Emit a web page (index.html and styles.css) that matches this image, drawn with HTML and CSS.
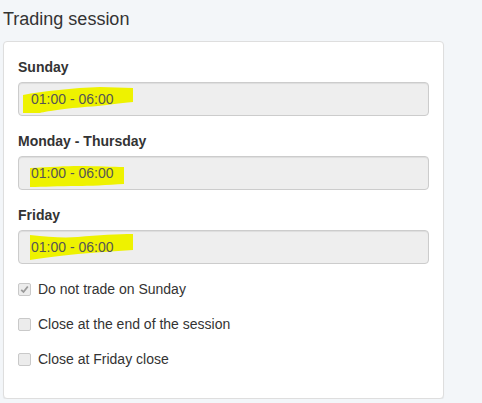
FILE: index.html
```html
<!DOCTYPE html>
<html>
<head>
<meta charset="utf-8">
<link rel="stylesheet" href="styles.css">
</head>
<body>
<h3 class="title">Trading session</h3>
<div class="card">
  <div class="group">
    <label class="lbl">Sunday</label>
    <div class="field">
      <svg class="hl" width="410" height="34" viewBox="0 0 410 34"><path d="M5 13 C25 9 55 6 82 5 L115 6 L115 20 C100 21 92 23 80 24 C50 26 30 29 22 31 L5 31 Z" fill="#eef200"/></svg>
      <span class="val">01:00 - 06:00</span>
    </div>
  </div>
  <div class="group">
    <label class="lbl">Monday - Thursday</label>
    <div class="field">
      <svg class="hl" width="410" height="34" viewBox="0 0 410 34"><path d="M12 12 C30 11 50 10 60 10 C80 10 95 11 106 11 L106 28 C90 29 70 30 60 30 C40 30 25 31 12 31 Z" fill="#eef200"/></svg>
      <span class="val">01:00 - 06:00</span>
    </div>
  </div>
  <div class="group">
    <label class="lbl">Friday</label>
    <div class="field">
      <svg class="hl" width="410" height="34" viewBox="0 0 410 34"><path d="M12 5 C30 7 45 8 60 7 C80 5 100 4 115 4 L115 20 C95 21 75 23 60 24 C40 26 25 28 12 30 Z" fill="#eef200"/></svg>
      <span class="val">01:00 - 06:00</span>
    </div>
  </div>
  <div class="checks">
    <label class="chk"><span class="box checked"><svg width="9" height="9" viewBox="0 0 9 9"><path d="M1.2 4.8 L3.5 7 L7.8 1.5" fill="none" stroke="#9a9a9a" stroke-width="1.8"/></svg></span>Do not trade on Sunday</label>
    <label class="chk"><span class="box"></span>Close at the end of the session</label>
    <label class="chk"><span class="box"></span>Close at Friday close</label>
  </div>
</div>
</body>
</html>
```
FILE: styles.css
```css
html, body {
  margin: 0;
  padding: 0;
  background: #f3f6f9;
}
body {
  font-family: "Liberation Sans", Arial, sans-serif;
  color: #333;
  padding: 0 3px;
  width: 441px;
}
.title {
  margin: 0;
  padding-top: 9px;
  font-size: 18px;
  line-height: 20px;
  font-weight: normal;
  color: #333;
}
.card {
  margin-top: 12px;
  background: #fff;
  border: 1px solid #dedede;
  border-radius: 4px;
  box-shadow: 0 1px 1px rgba(0,0,0,0.06);
  padding: 15px 14px 29px 14px;
}
.group {
  margin-bottom: 15px;
}
.lbl {
  display: block;
  font-size: 14px;
  line-height: 20px;
  font-weight: bold;
  margin-bottom: 5px;
  color: #333;
}
.field {
  position: relative;
  height: 34px;
  box-sizing: border-box;
  border: 1px solid #ccc;
  border-radius: 4px;
  background: #eee;
  box-shadow: inset 0 1px 1px rgba(0,0,0,0.075);
  padding: 6px 12px;
  font-size: 14px;
  line-height: 20px;
  color: #555;
}
.hl {
  position: absolute;
  left: -1px;
  top: -1px;
}
.val {
  position: relative;
}
.checks {
  display: flex;
  flex-direction: column;
  gap: 15px;
}
.chk {
  display: flex;
  align-items: center;
  font-size: 14px;
  line-height: 20px;
  color: #333;
}
.box {
  width: 13px;
  height: 13px;
  box-sizing: border-box;
  border: 1px solid #c9c9c9;
  border-radius: 2px;
  background: #ececec;
  margin-right: 7px;
  display: flex;
  align-items: center;
  justify-content: center;
}
```
